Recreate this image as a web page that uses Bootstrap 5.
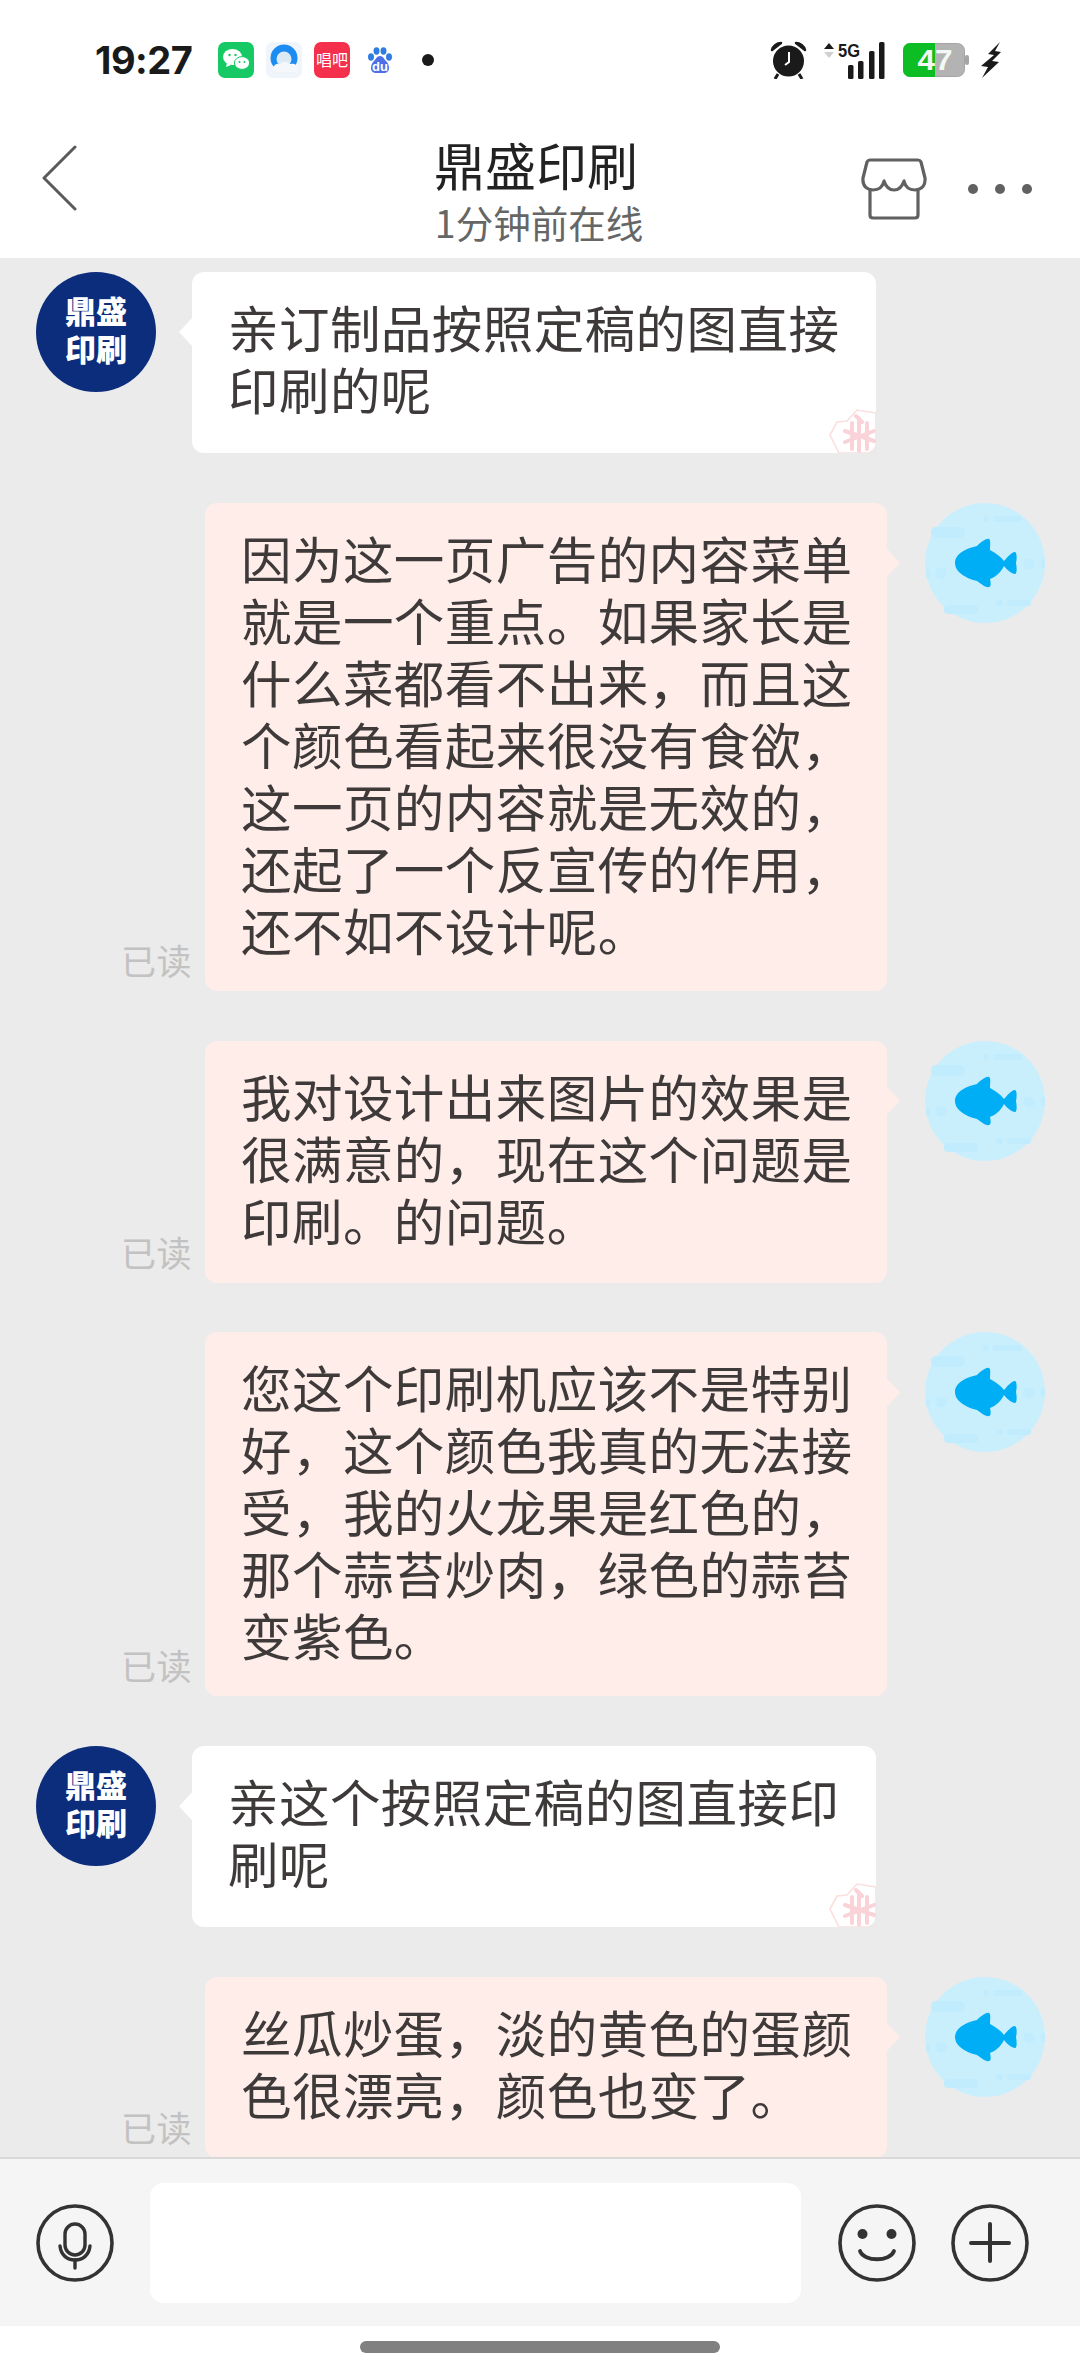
<!DOCTYPE html>
<html lang="zh-CN">
<head>
<meta charset="utf-8">
<title>鼎盛印刷</title>
<link href="https://cdn.jsdelivr.net/npm/bootstrap@5.3.0/dist/css/bootstrap.min.css" rel="stylesheet">
<style>
html,body{margin:0;background:#fff}
body{font-family:"Noto Sans CJK SC","Liberation Sans",sans-serif}
.phone{width:1080px;height:2374px;overflow:hidden}
.statusrow{height:120px;padding:0 79px 0 95px}
.clock{font-family:Inter,"Liberation Sans",sans-serif;font-weight:700;font-size:38px;letter-spacing:-.5px;color:#1a1a1a;line-height:1;width:123px}
.gap12{margin-left:12px}
.gap17{margin-left:17px}
.gap18{margin-left:18px}
.gap30{margin-left:30px}
.navrow{height:138px;padding:0 47px 0 42px}
.navside{flex:1 1 0;min-width:0}
.backicon{margin-bottom:22px}
.navtitle{font-size:51px;line-height:60px;color:#222;font-weight:400;margin-left:-6px}
.navsub{font-size:37.5px;line-height:44px;color:#666;margin-top:5.500px}
.dotsicon{margin-left:40px}
.titlestack{margin:0 0 0 3px}
.chatarea{flex:1 1 0;min-height:0;overflow:hidden;background:#ebebeb;padding-top:14px;gap:49.800px}
.msgin{padding-left:36px;gap:36px}
.msgout{padding-right:35px}
.face{width:120px;height:120px;flex:none}
.brand{background:#0c2d7b;border-radius:50%;color:#fff;font-weight:900;font-size:31px;line-height:38px;text-align:center;padding-bottom:6px}
.bubble{position:relative;font-size:50.5px;line-height:62px;letter-spacing:.45px;white-space:nowrap;color:#3f3a3a;padding:23px 36px 0 36px;border-radius:12px;font-weight:400}
.lines2{height:181px}
.lines3{height:242px}
.lines5{height:364px}
.lines7{height:488px}
.bubblein{background:#fff;width:684px}
.bubbleout{background:#ffedea;width:682px;margin-right:38px}
.bubble::before{content:"";position:absolute;width:14px;height:30px;top:45px}
.bubblein::before{left:-13px;background:#fff;clip-path:polygon(100% 0,0 50%,100% 100%)}
.bubbleout::before{right:-13px;background:#ffedea;clip-path:polygon(0 0,100% 50%,0 100%)}
.stamp{position:absolute;right:0;bottom:0;width:48px;height:44px}
.readmark{font-size:35px;line-height:44px;color:#c2c2c2;margin:0 13px 9px 0;letter-spacing:.5px}
.footbar{height:169px;background:#f5f5f5;border-top:2px solid #d9d9d9;padding:0 51px 0 36px}
.inputbox{width:651px;height:120px;background:#fff;border-radius:14px;margin:0 37px 0 36px}
.plusicon{margin-left:35px}
.homezone{height:48px}
.homebar{width:360px;height:12px;background:#808080;border-radius:6px;margin-bottom:6px}
.tinylabel{font-family:"Noto Sans CJK SC",sans-serif}
svg{display:block;flex:none}
</style>
</head>
<body>
<svg width="0" height="0" class="position-absolute">
  <defs>
    <symbol id="fish" viewBox="0 0 120 120">
      <circle cx="60" cy="60" r="60" fill="#c9effd"/>
      <g fill="#c0ecfd">
        <rect x="68" y="13" width="29" height="6" rx="3"/><rect x="58" y="13" width="6" height="6" rx="3"/>
        <rect x="6" y="24" width="34" height="11" rx="5"/>
        <circle cx="104" cy="61" r="5.500"/><rect x="116" y="56" width="4" height="9" rx="2"/>
        <circle cx="16" cy="70" r="5.500"/><rect x="1" y="66" width="4" height="9" rx="2"/>
        <rect x="19" y="102" width="34" height="9" rx="4"/>
        <rect x="82" y="97" width="24" height="6" rx="3"/><rect x="71" y="97" width="7" height="6" rx="3"/>
      </g>
      <path fill="#00aef5" d="M30 60C30 50 43 45 52 43 56 39 62 35 64 36 66 37 65 43 65 47 71 50 76 54 79 58 82 54 88 48 90 49 92 50 92 56 91 60 92 65 92 71 90 71 87 71 82 67 79 63 76 69 71 74 65 76 66 80 66 84 64 84 61 85 56 81 52 78 43 76 30 70 30 60Z"/>
    </symbol>
    <symbol id="stampmark" viewBox="0 0 48 44">
      <path d="M2 26 9 13l10-1 10-11 19 3v40H11Z" fill="none" stroke="#fbdfdf" stroke-width="1.600"/>
      <g stroke="#fad3d8" stroke-width="4" stroke-linecap="round"><path d="M24 14v26M31 11v31M39 14v26M17 22l29 10M17 33l29-11M28 7l6 6"/></g>
    </symbol>
  </defs>
</svg>
<div class="phone d-flex flex-column">
  <div class="statusrow d-flex align-items-center flex-shrink-0">
    <div class="clock">19:27</div>
    <div class="d-flex align-items-center">
      <svg width="36" height="36" viewBox="0 0 36 36"><rect width="36" height="36" rx="7" fill="#16c964"/><ellipse cx="14.500" cy="15" rx="9.500" ry="8" fill="#fff"/><path d="M9 21l-1 4 5-2z" fill="#fff"/><ellipse cx="24" cy="21" rx="7.600" ry="6.400" fill="#fff" stroke="#16c964"/><circle cx="11.500" cy="13" r="1.200" fill="#16c964"/><circle cx="17.500" cy="13" r="1.200" fill="#16c964"/><circle cx="21.500" cy="20" r="1" fill="#16c964"/><circle cx="26.500" cy="20" r="1" fill="#16c964"/></svg>
      <svg class="gap12" width="36" height="36" viewBox="0 0 36 36"><rect width="36" height="36" rx="7" fill="#f0f4fb"/><circle cx="18" cy="16" r="13.500" fill="#1d8cf0"/><circle cx="18" cy="17" r="7.500" fill="#dceaf6"/><path d="M7 27c0-4 4-6 7-5 2-3 8-3 10 0 4-1 8 1 8 5 0 2-2 3-4 3H11c-2 0-4-1-4-3z" fill="#f4f8fc"/></svg>
      <svg class="gap12" width="36" height="36" viewBox="0 0 36 36"><rect width="36" height="36" rx="7" fill="#f4304c"/><text x="18" y="24" text-anchor="middle" fill="#fff" font-size="16" class="tinylabel">唱吧</text></svg>
      <svg class="gap18" width="24" height="27" viewBox="0 0 24 27"><g fill="#2f7de0"><ellipse cx="3" cy="10" rx="3" ry="3.700"/><ellipse cx="8.500" cy="4" rx="3" ry="3.700"/><ellipse cx="15.500" cy="4" rx="3" ry="3.700"/><ellipse cx="21" cy="10" rx="3" ry="3.700"/></g><path d="M12 9c3 0 4 3 6 5 2 2 3 4 3 7 0 4-3 5-5 5H8c-2 0-5-1-5-5 0-3 1-5 3-7 2-2 3-5 6-5z" fill="#4f6fe6"/><text x="12" y="23.500" text-anchor="middle" fill="#fff" font-size="13" font-weight="700" font-family="Liberation Sans">du</text></svg>
      <svg class="gap30" width="12" height="12" viewBox="0 0 12 12"><circle cx="6" cy="6" r="6" fill="#1a1a1a"/></svg>
    </div>
    <div class="d-flex align-items-center ms-auto">
      <svg width="37" height="38" viewBox="0 0 37 38"><circle cx="18.500" cy="20" r="15.500" fill="#1a1a1a"/><path d="M2 9c1-4 5-7 9-7L2 9zM35 9c-1-4-5-7-9-7l9 7z" fill="#1a1a1a" stroke="#1a1a1a" stroke-width="2.500" stroke-linejoin="round"/><path d="M8 33l-3 5M29 33l3 5" stroke="#1a1a1a" stroke-width="3"/><path d="M19 11v10l-4 3" fill="none" stroke="#fff" stroke-width="2"/></svg>
      <svg class="gap17" width="61" height="38" viewBox="0 0 61 38"><path d="M0 8l5-6 5 6z" fill="#1a1a1a"/><path d="M0 11l5 6 5-6z" fill="#d0d0d0"/><text x="14" y="15.500" font-family="Liberation Sans" font-weight="700" font-size="18" fill="#1a1a1a" textLength="22" lengthAdjust="spacingAndGlyphs">5G</text><rect x="24" y="24" width="5.500" height="14" rx="1.500" fill="#1a1a1a"/><rect x="34" y="20" width="5.500" height="18" rx="1.500" fill="#1a1a1a"/><rect x="45" y="10" width="5.500" height="28" rx="1.500" fill="#1a1a1a"/><rect x="55" y="1" width="5.500" height="37" rx="1.500" fill="#1a1a1a"/></svg>
      <svg class="gap18" width="66" height="34" viewBox="0 0 66 34"><rect x=".5" y=".5" width="61" height="33" rx="7" fill="#b3b3b3" stroke="#a5a5a5"/><path d="M7 0h25v34H7a7 7 0 0 1-7-7V7a7 7 0 0 1 7-7z" fill="#0cbd23"/><rect x="62" y="12" width="4" height="10" rx="2" fill="#a5a5a5"/><text x="32" y="27" text-anchor="middle" fill="#f2f8f2" font-family="Liberation Sans" font-weight="700" font-size="30" textLength="35" lengthAdjust="spacingAndGlyphs">47</text></svg>
      <svg class="gap12" width="20" height="36" viewBox="0 0 20 36"><path d="M19 0 7 12l6 1L0 24l7 1-6 11 17-16-7-1 9-9-6-1z" fill="#1a1a1a"/></svg>
    </div>
  </div>

  <div class="navrow d-flex align-items-center flex-shrink-0">
    <div class="navside">
      <svg class="backicon" width="35" height="66" viewBox="0 0 35 66"><path d="M33 2 2 33l31 31" fill="none" stroke="#5a5a5a" stroke-width="3" stroke-linecap="round" stroke-linejoin="round"/></svg>
    </div>
    <div class="text-center titlestack">
      <div class="navtitle">鼎盛印刷</div>
      <div class="navsub">1分钟前在线</div>
    </div>
    <div class="navside d-flex justify-content-end align-items-center">
      <svg width="66" height="62" viewBox="0 0 66 62"><path d="M9 30V57Q9 60 12 60H54Q57 60 57 57V30" fill="none" stroke="#616161" stroke-width="3.200"/><path d="M9 2H57Q59 2 60 4L64 20Q65 31 54 32Q45 32 43 23Q40 32 33 32Q26 32 23 23Q21 32 12 32Q1 31 2 20L6 4Q7 2 9 2Z" fill="#fff" stroke="#616161" stroke-width="3.200" stroke-linejoin="round"/></svg>
      <svg class="dotsicon" width="66" height="12" viewBox="0 0 66 12"><circle cx="6" cy="6" r="5" fill="#616161"/><circle cx="33" cy="6" r="5" fill="#616161"/><circle cx="60" cy="6" r="5" fill="#616161"/></svg>
    </div>
  </div>

  <main class="chatarea d-flex flex-column">
    <div class="msgin d-flex align-items-start">
      <div class="face brand d-flex align-items-center justify-content-center">鼎盛<br>印刷</div>
      <div class="bubble bubblein lines2">亲订制品按照定稿的图直接<br>印刷的呢<svg class="stamp"><use href="#stampmark"/></svg></div>
    </div>
    <div class="msgout d-flex justify-content-end align-items-start">
      <div class="readmark align-self-end">已读</div>
      <div class="bubble bubbleout lines7">因为这一页广告的内容菜单<br>就是一个重点。如果家长是<br>什么菜都看不出来，而且这<br>个颜色看起来很没有食欲，<br>这一页的内容就是无效的，<br>还起了一个反宣传的作用，<br>还不如不设计呢。</div>
      <svg class="face"><use href="#fish"/></svg>
    </div>
    <div class="msgout d-flex justify-content-end align-items-start">
      <div class="readmark align-self-end">已读</div>
      <div class="bubble bubbleout lines3">我对设计出来图片的效果是<br>很满意的，现在这个问题是<br>印刷。的问题。</div>
      <svg class="face"><use href="#fish"/></svg>
    </div>
    <div class="msgout d-flex justify-content-end align-items-start">
      <div class="readmark align-self-end">已读</div>
      <div class="bubble bubbleout lines5">您这个印刷机应该不是特别<br>好，这个颜色我真的无法接<br>受，我的火龙果是红色的，<br>那个蒜苔炒肉，绿色的蒜苔<br>变紫色。</div>
      <svg class="face"><use href="#fish"/></svg>
    </div>
    <div class="msgin d-flex align-items-start">
      <div class="face brand d-flex align-items-center justify-content-center">鼎盛<br>印刷</div>
      <div class="bubble bubblein lines2">亲这个按照定稿的图直接印<br>刷呢<svg class="stamp"><use href="#stampmark"/></svg></div>
    </div>
    <div class="msgout d-flex justify-content-end align-items-start">
      <div class="readmark align-self-end">已读</div>
      <div class="bubble bubbleout lines2">丝瓜炒蛋，淡的黄色的蛋颜<br>色很漂亮，颜色也变了。</div>
      <svg class="face"><use href="#fish"/></svg>
    </div>
  </main>

  <div class="footbar d-flex align-items-center flex-shrink-0">
    <svg width="78" height="78" viewBox="0 0 78 78"><circle cx="39" cy="39" r="37" fill="none" stroke="#333" stroke-width="3.600"/><rect x="29" y="20" width="20" height="31" rx="10" fill="none" stroke="#333" stroke-width="3.400"/><path d="M24 42c1 9 7 14 15 14s14-5 15-14" fill="none" stroke="#333" stroke-width="3.400" stroke-linecap="round"/><path d="M39 56v8" stroke="#333" stroke-width="3.400" stroke-linecap="round"/></svg>
    <div class="inputbox"></div>
    <svg width="78" height="78" viewBox="0 0 78 78"><circle cx="39" cy="39" r="37" fill="none" stroke="#333" stroke-width="3.600"/><circle cx="24.500" cy="30" r="5" fill="#333"/><circle cx="53.500" cy="30" r="5" fill="#333"/><path d="M22 47c4 11 30 11 34 0" fill="none" stroke="#333" stroke-width="3.800" stroke-linecap="round"/></svg>
    <svg class="plusicon" width="78" height="78" viewBox="0 0 78 78"><circle cx="39" cy="39" r="37" fill="none" stroke="#333" stroke-width="3.600"/><path d="M39 20v37M20 39h38" stroke="#333" stroke-width="4" stroke-linecap="round"/></svg>
  </div>
  <div class="homezone d-flex align-items-center justify-content-center flex-shrink-0">
    <div class="homebar"></div>
  </div>
</div>
</body>
</html>
